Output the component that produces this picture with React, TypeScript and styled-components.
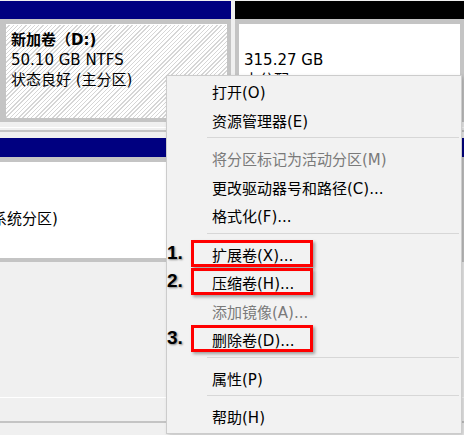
import React from 'react';
import styled, { createGlobalStyle } from 'styled-components';

const GlobalStyle = createGlobalStyle`
  html, body {
    margin: 0;
    padding: 0;
    background: #f0f0f0;
  }
  body {
    width: 464px;
    height: 435px;
    overflow: hidden;
    font-family: "DejaVu Sans", "Noto Sans CJK SC", sans-serif;
  }
`;

const Screen = styled.div`
  position: relative;
  width: 464px;
  height: 435px;
  overflow: hidden;
  background: #f0f0f0;
  color: #000;
  font-size: 15px;
`;

const DiskRow = styled.div<{ $height: number; $top: number }>`
  height: ${p => p.$height}px;
  padding-top: ${p => p.$top}px;
  box-sizing: border-box;
  border-bottom: 1px solid #ffffff;
  display: flex;
  gap: 4px;
  align-items: flex-start;
`;

const RowRule = styled.div<{ $gap: number }>`
  margin-top: ${p => p.$gap}px;
  border-top: 2px solid #c4c4c4;
`;

const Partition = styled.div<{ $width?: number }>`
  flex: ${p => (p.$width ? `0 0 ${p.$width}px` : '1 1 0')};
  display: flex;
  flex-direction: column;
`;

const PartHeader = styled.div<{ $color: string; $height: number }>`
  height: ${p => p.$height}px;
  background: ${p => p.$color};
`;

const PartBody = styled.div<{ $height: number; $left: number }>`
  height: ${p => p.$height}px;
  box-sizing: border-box;
  display: flex;
  background: #c4c4c4;
  padding: 5px 4px 4px ${p => p.$left}px;
`;

const PartFill = styled.div<{ $hatched?: boolean; $top: number; $indent?: number }>`
  flex: 1;
  min-width: 0;
  overflow: hidden;
  border-top: 1px solid #ffffff;
  background: ${p =>
    p.$hatched
      ? 'repeating-linear-gradient(135deg, #ffffff 0 2px, #d6d6d6 2px 3px)'
      : '#ffffff'};
  padding: ${p => p.$top}px 5px 0 5px;
  text-indent: ${p => p.$indent ?? 0}px;
  line-height: 20px;
  white-space: nowrap;
`;

const PartTitle = styled.div`
  font-weight: bold;
  height: 20px;
`;

const PartLine = styled.div`
  height: 20px;
`;

const Menu = styled.div`
  position: absolute;
  left: 166px;
  top: 75px;
  width: 296px;
  box-sizing: border-box;
  padding: 0 0 3px;
  background: #f2f2f2;
  border: 1px solid #cccccc;
  box-shadow: 2px 2px 4px rgba(0, 0, 0, 0.18);
  font-size: 15px;
`;

const MenuItem = styled.div<{ $disabled?: boolean }>`
  position: relative;
  height: 28.5px;
  box-sizing: border-box;
  padding: 6px 0 0 45px;
  line-height: 22px;
  white-space: nowrap;
  color: ${p => (p.$disabled ? '#7a7a7a' : '#000000')};
`;

const Separator = styled.div`
  height: 1px;
  margin: 4px 2px 5px 40px;
  background: #d7d7d7;
`;

const Highlight = styled.div`
  position: absolute;
  left: 24px;
  top: 1px;
  width: 122px;
  height: 27px;
  box-sizing: border-box;
  border: 3px solid #ff0000;
  box-shadow: 2px 2px 3px rgba(0, 0, 0, 0.35);
`;

const StepNumber = styled.div`
  position: absolute;
  left: 0;
  top: 0;
  height: 28.5px;
  display: flex;
  align-items: center;
  font-family: "Liberation Sans", Arial, sans-serif;
  font-weight: bold;
  font-size: 19px;
  text-shadow: 1px 1px 2px rgba(0, 0, 0, 0.45);
`;

type Entry =
  | { kind: 'item'; label: string; disabled?: boolean; step?: number }
  | { kind: 'sep' };

const entries: Entry[] = [
  { kind: 'item', label: '打开(O)' },
  { kind: 'item', label: '资源管理器(E)' },
  { kind: 'sep' },
  { kind: 'item', label: '将分区标记为活动分区(M)', disabled: true },
  { kind: 'item', label: '更改驱动器号和路径(C)...' },
  { kind: 'item', label: '格式化(F)...' },
  { kind: 'sep' },
  { kind: 'item', label: '扩展卷(X)...', step: 1 },
  { kind: 'item', label: '压缩卷(H)...', step: 2 },
  { kind: 'item', label: '添加镜像(A)...', disabled: true },
  { kind: 'item', label: '删除卷(D)...', step: 3 },
  { kind: 'sep' },
  { kind: 'item', label: '属性(P)' },
  { kind: 'sep' },
  { kind: 'item', label: '帮助(H)' },
];

export default function App() {
  return (
    <Screen>
      <GlobalStyle />
      <DiskRow $height={128} $top={1}>
        <Partition $width={231}>
          <PartHeader $color="#000080" $height={18} />
          <PartBody $height={103} $left={6}>
            <PartFill $hatched $top={5}>
              <PartTitle>新加卷（D:)</PartTitle>
              <PartLine>50.10 GB NTFS</PartLine>
              <PartLine>状态良好 (主分区)</PartLine>
            </PartFill>
          </PartBody>
        </Partition>
        <Partition>
          <PartHeader $color="#000000" $height={18} />
          <PartBody $height={103} $left={4}>
            <PartFill $top={5}>
              <PartLine />
              <PartLine>315.27 GB</PartLine>
              <PartLine>未分配</PartLine>
            </PartFill>
          </PartBody>
        </Partition>
      </DiskRow>
      <RowRule $gap={2} />
      <DiskRow $height={266} $top={6}>
        <Partition>
          <PartHeader $color="#000080" $height={19} />
          <PartBody $height={105} $left={0}>
            <PartFill $top={46} $indent={-13}>
              <PartLine>系统分区)</PartLine>
            </PartFill>
          </PartBody>
        </Partition>
      </DiskRow>
      <RowRule $gap={23} />

      <Menu>
        {entries.map((e, i) =>
          e.kind === 'sep' ? (
            <Separator key={i} />
          ) : (
            <MenuItem key={i} $disabled={e.disabled}>
              {e.label}
              {e.step && (
                <>
                  <Highlight />
                  <StepNumber>{e.step}.</StepNumber>
                </>
              )}
            </MenuItem>
          )
        )}
      </Menu>
    </Screen>
  );
}
